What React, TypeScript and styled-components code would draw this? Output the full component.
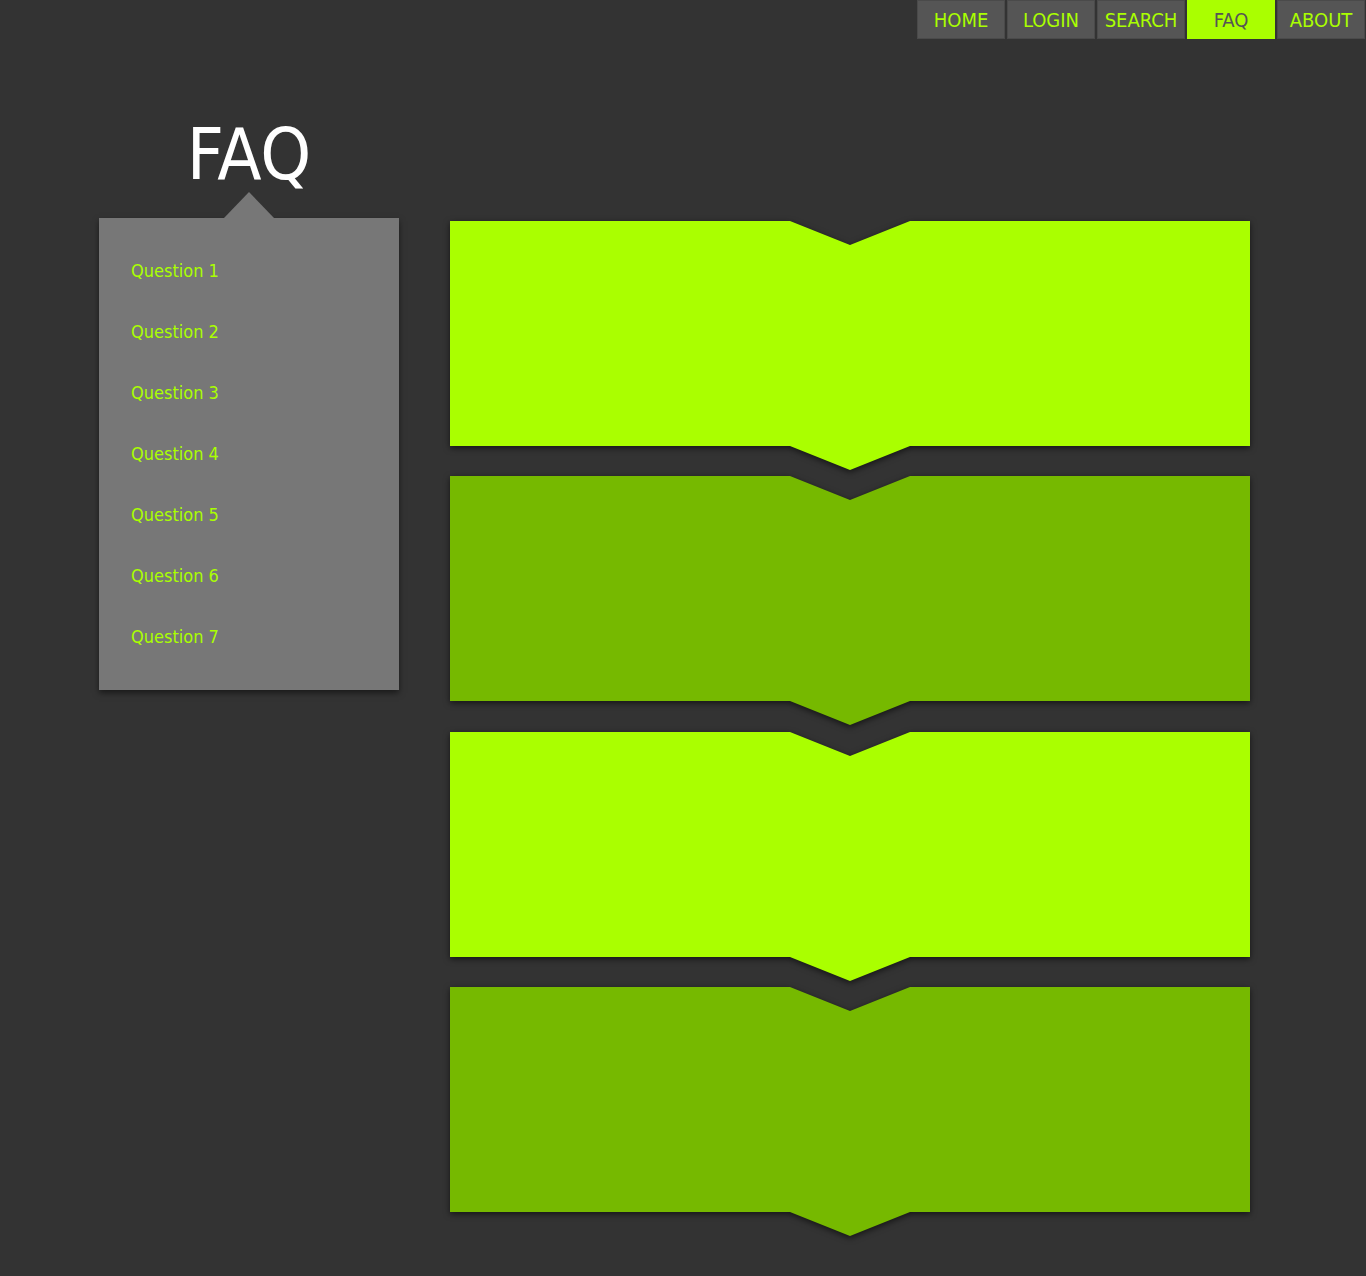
import {createGlobalStyle} from 'styled-components';
import styled from 'styled-components';

const GlobalStyle = createGlobalStyle`
  body {
    margin: 0;
    background: #333;
    font-family: 'DejaVu Sans Condensed', 'Liberation Sans', sans-serif;
  }
`;

const Page = styled.div`
  min-height: 1276px;
  background: #333;
`;

const Nav = styled.nav`
  display: flex;
  justify-content: flex-end;
  gap: 2px;
  padding-right: 1px;
`;

const NavItem = styled.a<{$isActive?: boolean}>`
  box-sizing: border-box;
  width: 88px;
  height: 39px;
  display: flex;
  align-items: center;
  justify-content: center;
  font-size: 20px;
  text-decoration: none;
  background: ${({$isActive}) => ($isActive ? '#aaff00' : '#555')};
  color: ${({$isActive}) => ($isActive ? '#555' : '#aaff00')};
  border: 1px solid ${({$isActive}) => ($isActive ? '#aaff00' : '#4a4a4a')};
  cursor: pointer;
`;

const Main = styled.div`
  display: flex;
  align-items: flex-start;
  gap: 51px;
  padding-left: 99px;
`;

const Sidebar = styled.aside`
  width: 300px;
  flex-shrink: 0;
`;

const Title = styled.h1`
  margin: 79px 0 0;
  font-size: 72px;
  line-height: 72px;
  font-weight: 400;
  color: #fff;
  text-align: center;
`;

const Panel = styled.ul`
  position: relative;
  list-style: none;
  margin: 28px 0 0;
  padding: 22px 0 23px 32px;
  background: #777;
  box-shadow: 0 3px 6px rgba(0, 0, 0, 0.5);

  &::before {
    content: '';
    position: absolute;
    top: -26px;
    left: 125px;
    border-left: 25px solid transparent;
    border-right: 25px solid transparent;
    border-bottom: 26px solid #777;
  }
`;

const Question = styled.li`
  font-size: 18px;
  line-height: 61px;
  color: #aaff00;
  cursor: pointer;
`;

const Blocks = styled.div`
  display: flex;
  flex-direction: column;
  gap: 6px;
  padding-top: 182px;
`;

const BlockShadow = styled.div`
  filter: drop-shadow(0 2px 3px rgba(0, 0, 0, 0.6));

  &:nth-child(3) {
    margin-top: 1px;
  }
`;

const Block = styled.div<{$dark?: boolean}>`
  width: 800px;
  height: 249px;
  background: ${({$dark}) => ($dark ? '#76b900' : '#aaff00')};
  clip-path: polygon(
    0 0,
    340px 0,
    400px 24px,
    460px 0,
    800px 0,
    800px 225px,
    460px 225px,
    400px 249px,
    340px 225px,
    0 225px
  );
`;

const navLinks = ['HOME', 'LOGIN', 'SEARCH', 'FAQ', 'ABOUT'];
const questions = [1, 2, 3, 4, 5, 6, 7];

const App = () => (
  <Page>
    <GlobalStyle />
    <Nav>
      {navLinks.map((link) => (
        <NavItem key={link} $isActive={link === 'FAQ'}>
          {link}
        </NavItem>
      ))}
    </Nav>
    <Main>
      <Sidebar>
        <Title>FAQ</Title>
        <Panel>
          {questions.map((n) => (
            <Question key={n}>Question {n}</Question>
          ))}
        </Panel>
      </Sidebar>
      <Blocks>
        {[false, true, false, true].map((dark, i) => (
          <BlockShadow key={i}>
            <Block $dark={dark} />
          </BlockShadow>
        ))}
      </Blocks>
    </Main>
  </Page>
);

export default App;
